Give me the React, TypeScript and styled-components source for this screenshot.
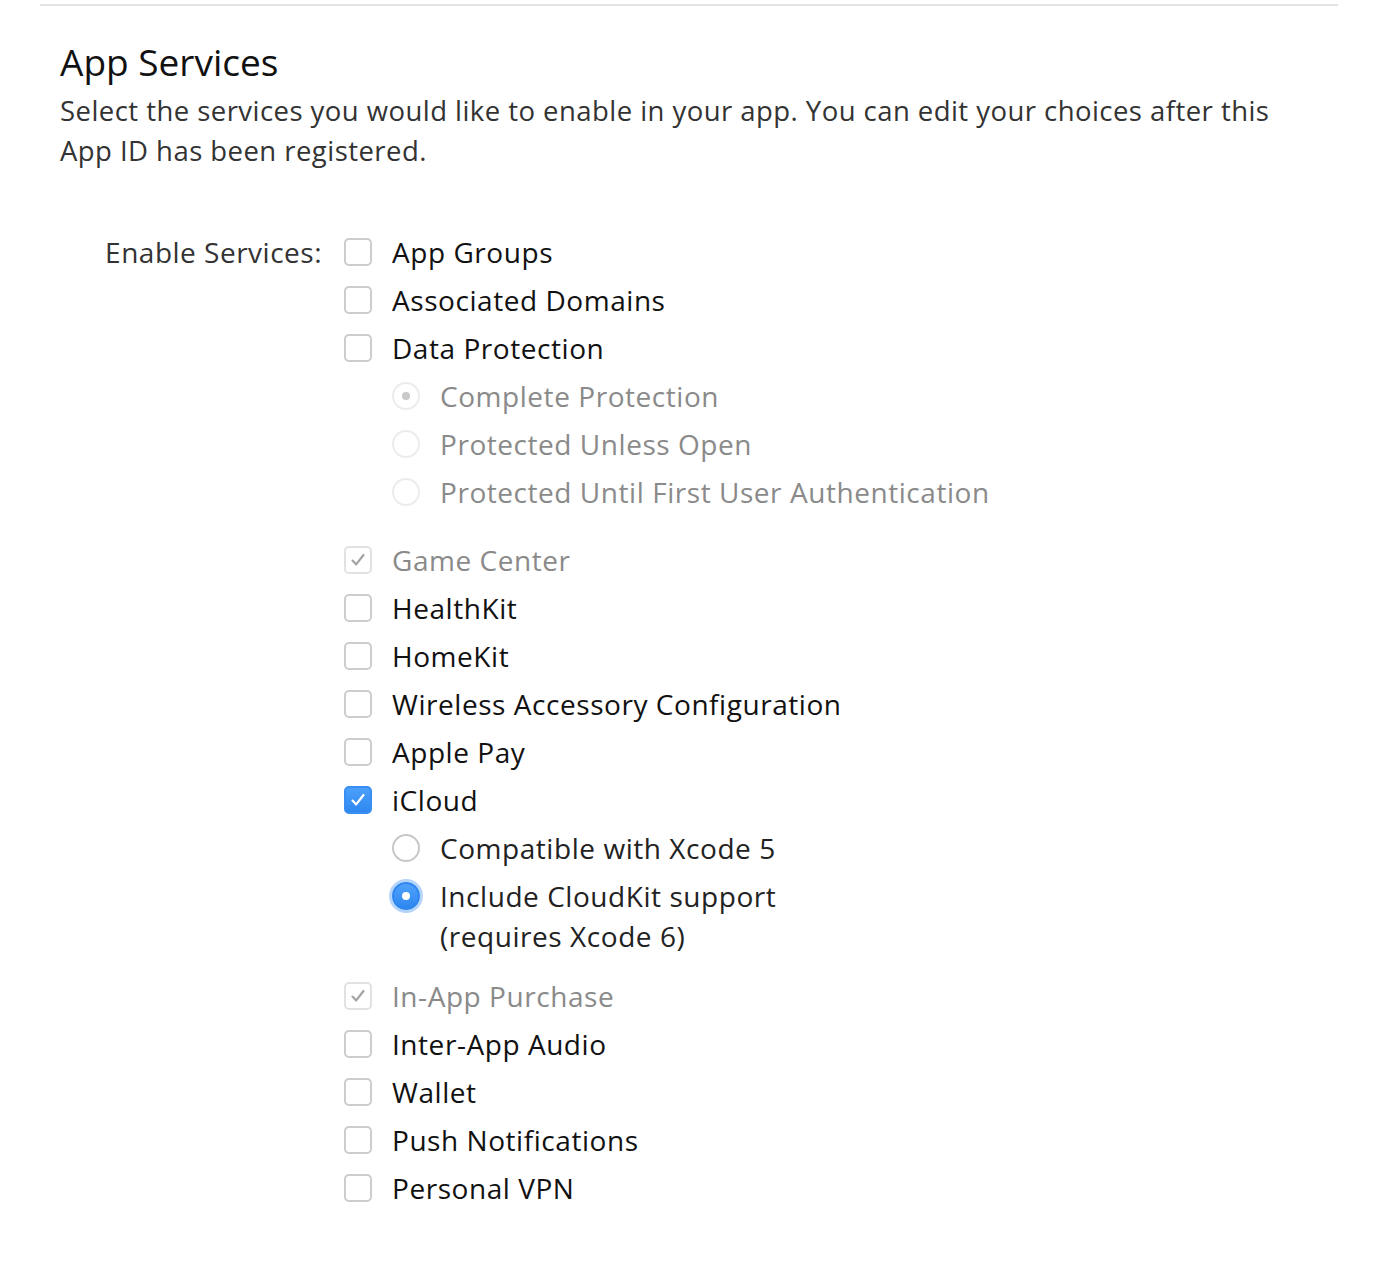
import React from "react";
import styled, { createGlobalStyle, css } from "styled-components";

const FONT = `"Open Sans", "Noto Sans", sans-serif`;

const GlobalStyle = createGlobalStyle`
  html, body {
    margin: 0;
    padding: 0;
    background: #fff;
  }
  body {
    font-family: ${FONT};
    -webkit-font-smoothing: antialiased;
  }
`;

const Page = styled.div`
  width: 1394px;
  min-height: 1274px;
  padding-top: 4px;
  box-sizing: border-box;
`;

const Rule = styled.hr`
  margin: 0 56px 0 40px;
  border: none;
  border-top: 2px solid #e3e3e3;
`;

const Section = styled.section`
  padding: 32px 60px 0 60px;
`;

const Title = styled.h2`
  margin: 0;
  font-size: 37px;
  font-weight: 400;
  line-height: 48px;
  color: #111;
`;

const Description = styled.p`
  margin: 5px 0 0;
  font-size: 27.5px;
  line-height: 40px;
  letter-spacing: 0.45px;
  color: #333;
`;

const FormRow = styled.div`
  display: grid;
  grid-template-columns: 262px 1fr;
  column-gap: 22px;
  margin-top: 57px;
`;

const FieldLabel = styled.div`
  font-size: 28px;
  line-height: 40px;
  padding-top: 4px;
  letter-spacing: 0.5px;
  color: #333;
  text-align: right;
`;

const OptionList = styled.div`
  display: flex;
  flex-direction: column;
`;

const Group = styled.div<{ $after?: number }>`
  display: flex;
  flex-direction: column;
  margin-bottom: ${(p) => p.$after ?? 0}px;
`;

const Row = styled.label<{ $indent?: boolean }>`
  display: flex;
  align-items: flex-start;
  gap: 20px;
  padding: 4px 0;
  padding-left: ${(p) => (p.$indent ? 48 : 0)}px;
`;

const Label = styled.span<{ $disabled?: boolean; $sub?: boolean }>`
  font-size: 28px;
  line-height: 40px;
  color: ${(p) => (p.$disabled ? "#8a8a8a" : p.$sub ? "#222" : "#111")};
  letter-spacing: 0.55px;
`;

const ControlSlot = styled.span`
  display: flex;
  align-items: center;
  justify-content: center;
  width: 28px;
  height: 40px;
  flex: none;
`;

const Box = styled.span<{ $checked?: boolean; $disabled?: boolean }>`
  width: 28px;
  height: 28px;
  box-sizing: border-box;
  border-radius: 5px;
  border: 2px solid #cdcdcd;
  background: #fff;
  display: flex;
  align-items: center;
  justify-content: center;
  ${(p) =>
    p.$disabled &&
    css`
      border-color: #e2e2e2;
    `}
  ${(p) =>
    p.$checked &&
    !p.$disabled &&
    css`
      border-color: #3a8ef2;
      background: linear-gradient(#4ba0fb, #2f88f0);
    `}
`;

const Circle = styled.span<{ $checked?: boolean; $disabled?: boolean }>`
  width: 28px;
  height: 28px;
  box-sizing: border-box;
  border-radius: 50%;
  border: 2px solid #c8c8c8;
  background: #fff;
  display: flex;
  align-items: center;
  justify-content: center;
  ${(p) =>
    p.$disabled &&
    css`
      border-color: #ececec;
    `}
  ${(p) =>
    p.$checked &&
    !p.$disabled &&
    css`
      border-color: #2f86ee;
      background: linear-gradient(#4ea2fb, #2e87f0);
      box-shadow: 0 0 0 3px rgba(90, 160, 245, 0.45);
    `}
`;

const Dot = styled.span<{ $disabled?: boolean }>`
  width: 8px;
  height: 8px;
  border-radius: 50%;
  background: ${(p) => (p.$disabled ? "#c9c9c9" : "#fff")};
`;

const Check = ({ color }: { color: string }) => (
  <svg width="18" height="18" viewBox="0 0 18 18">
    <path
      d="M3.5 9.6 L7.2 13.4 L14.5 4"
      fill="none"
      stroke={color}
      strokeWidth="2.2"
      strokeLinecap="round"
      strokeLinejoin="round"
    />
  </svg>
);

const Checkbox = ({ checked, disabled }: { checked?: boolean; disabled?: boolean }) => (
  <ControlSlot>
    <Box $checked={checked} $disabled={disabled}>
      {checked && <Check color={disabled ? "#a3a3a3" : "#fff"} />}
    </Box>
  </ControlSlot>
);

const Radio = ({ checked, disabled }: { checked?: boolean; disabled?: boolean }) => (
  <ControlSlot>
    <Circle $checked={checked} $disabled={disabled}>
      {checked && <Dot $disabled={disabled} />}
    </Circle>
  </ControlSlot>
);

type Option = { label: string; checked?: boolean; disabled?: boolean };

const CheckRow = ({ label, checked, disabled }: Option) => (
  <Row>
    <Checkbox checked={checked} disabled={disabled} />
    <Label $disabled={disabled}>{label}</Label>
  </Row>
);

const RadioRow = ({ label, checked, disabled }: Option) => (
  <Row $indent>
    <Radio checked={checked} disabled={disabled} />
    <Label $disabled={disabled} $sub>
      {label}
    </Label>
  </Row>
);

export default function App() {
  return (
    <Page>
      <GlobalStyle />
      <Rule />
      <Section>
        <Title>App Services</Title>
        <Description>
          Select the services you would like to enable in your app. You can edit your choices after this
          <br />
          App ID has been registered.
        </Description>
        <FormRow>
          <FieldLabel>Enable Services:</FieldLabel>
          <OptionList>
            <CheckRow label="App Groups" />
            <CheckRow label="Associated Domains" />
            <Group $after={20}>
              <CheckRow label="Data Protection" />
              <RadioRow label="Complete Protection" checked disabled />
              <RadioRow label="Protected Unless Open" disabled />
              <RadioRow label="Protected Until First User Authentication" disabled />
            </Group>
            <CheckRow label="Game Center" checked disabled />
            <CheckRow label="HealthKit" />
            <CheckRow label="HomeKit" />
            <CheckRow label="Wireless Accessory Configuration" />
            <CheckRow label="Apple Pay" />
            <Group $after={12}>
              <CheckRow label="iCloud" checked />
              <RadioRow label="Compatible with Xcode 5" />
              <Row $indent>
                <Radio checked />
                <Label $sub>
                  Include CloudKit support
                  <br />
                  (requires Xcode 6)
                </Label>
              </Row>
            </Group>
            <CheckRow label="In-App Purchase" checked disabled />
            <CheckRow label="Inter-App Audio" />
            <CheckRow label="Wallet" />
            <CheckRow label="Push Notifications" />
            <CheckRow label="Personal VPN" />
          </OptionList>
        </FormRow>
      </Section>
    </Page>
  );
}
